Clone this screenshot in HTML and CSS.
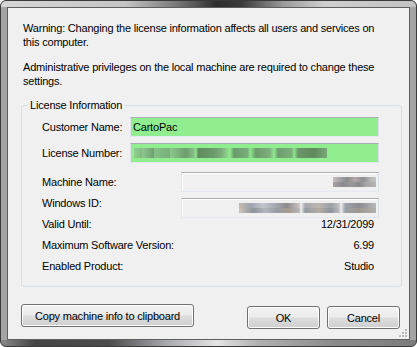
FILE: index.html
```html
<!DOCTYPE html>
<html lang="en">
<head>
    <meta charset="UTF-8">
    <title>License Information</title>
    <link rel="stylesheet" href="styles.css">
</head>
<body>

<div class="window">
    <div class="client">
        <p class="warning">Warning: Changing the license information affects all users and services on this computer.</p>
        <p class="warning second">Administrative privileges on the local machine are required to change these settings.</p>

        <div class="group">
            <span class="legend">License Information</span>

            <div class="row">
                <label class="label-short">Customer Name:</label>
                <div class="field edit">CartoPac</div>
            </div>
            <div class="row gap-small">
                <label class="label-short">License Number:</label>
                <div class="field edit"><span class="mosaic license"></span></div>
            </div>

            <div class="row gap-large">
                <label class="label-long">Machine Name:</label>
                <div class="field readonly"><span class="mosaic machine"></span></div>
            </div>
            <div class="row gap-small top">
                <label class="label-long">Windows ID:</label>
                <div class="field readonly"><span class="mosaic winid"></span></div>
            </div>

            <div class="info first">
                <span>Valid Until:</span>
                <span class="value">12/31/2099</span>
            </div>
            <div class="info">
                <span>Maximum Software Version:</span>
                <span class="value">6.99</span>
            </div>
            <div class="info">
                <span>Enabled Product:</span>
                <span class="value">Studio</span>
            </div>
        </div>

        <div class="buttons">
            <button class="btn copy">Copy machine info to clipboard</button>
            <div class="dialog-buttons">
                <button class="btn">OK</button>
                <button class="btn">Cancel</button>
            </div>
        </div>

        <svg class="grip" width="10" height="10" viewBox="0 0 10 10">
            <rect x="7" y="1" width="2" height="2" fill="#b8b8b8"/>
            <rect x="4" y="4" width="2" height="2" fill="#b8b8b8"/>
            <rect x="7" y="4" width="2" height="2" fill="#b8b8b8"/>
            <rect x="1" y="7" width="2" height="2" fill="#b8b8b8"/>
            <rect x="4" y="7" width="2" height="2" fill="#b8b8b8"/>
            <rect x="7" y="7" width="2" height="2" fill="#b8b8b8"/>
        </svg>
    </div>
</div>

</body>
</html>
```

FILE: styles.css
```css
body { margin: 0; font-family: "Liberation Sans", Arial, sans-serif; font-size: 11px; letter-spacing: -0.2px; color: #000; }

.window {
    width: 417px;
    height: 347px;
    box-sizing: border-box;
    border: 1px solid #3a3a3a;
    border-radius: 6px;
    padding: 6px;
    background:
        linear-gradient(90deg, #d6d6d6 0%, #c4c4c4 30%, #7a7a7a 42%, #2e2e2e 52%, #3a3a3a 58%, #9a9a9a 68%, #cfcfcf 78%, #c2c2c2 100%) top / 100% 6px no-repeat,
        linear-gradient(90deg, #8a8a8a 0%, #454545 8%, #4c4c4c 26%, #a8a8b0 40%, #e4e4e4 52%, #b0b0b0 62%, #8c8c8c 80%, #7c7c7c 100%) bottom / 100% 6px no-repeat,
        #a4a4a4;
}

.client {
    position: relative;
    height: 100%;
    box-sizing: border-box;
    border: 1px solid #5e5e5e;
    background-color: #f0f0f0;
    padding-top: 13px;
}

.warning { margin: 0 0 0 15px; line-height: 14px; width: 370px; }
.warning.second { margin-top: 11px; }

.group {
    position: relative;
    width: 381px;
    box-sizing: border-box;
    margin: 17px 0 0 13px;
    padding: 11px 22px 9px 20px;
    border: 1px solid #d5dfe5;
    border-radius: 3px;
}
.legend {
    position: absolute;
    top: -8px;
    left: 6px;
    padding: 0 2px;
    line-height: 14px;
    background-color: #f0f0f0;
}

.row { display: flex; align-items: center; height: 20px; }
.row.gap-small { margin-top: 6px; }
.row.gap-large { margin-top: 9px; }
.row.top { align-items: flex-start; }
.row.top label { margin-top: -2px; }
.row label { line-height: 14px; }

.label-short { width: 88px; flex-shrink: 0; }
.label-long { width: 139px; flex-shrink: 0; }

.field {
    flex: 1;
    height: 20px;
    box-sizing: border-box;
    border: 1px solid;
    border-color: #abadb3 #dbdfe6 #e3e9ef #e2e3ea;
    display: flex;
    align-items: center;
    padding: 0 2px;
    line-height: 14px;
}
.edit { background-color: #90ee90; }
.readonly { background-color: #f0f0f0; justify-content: flex-end; box-shadow: inset 1px 1px 0 #fff; }

.mosaic { display: block; height: 10px; }
.license {
    width: 193px;
    margin-left: 1px;
    background:
        linear-gradient(90deg, #8fd08f 0, #7fba7f 8px, #90c890 8px, #6f9f6f 20px, #86c086 20px, #7aae7a 36px, #8cc88c 36px, #6e9c6e 52px, #86be86 60px, #90e890 62px,
            #5f8a5f 64px, #6c9a6c 80px, #7fae7f 88px, #90e890 96px, #6a9a6a 100px, #7cae7c 114px, #90e890 116px,
            #6a9a6a 122px, #80b080 136px, #90e890 140px, #6e9c6e 144px, #7cb07c 158px, #90e890 160px, #6a966a 164px, #5f8a5f 180px, #78a878 193px);
}
.machine {
    width: 43px;
    background:
        linear-gradient(90deg, #c8bcbc 0, #a0a0a8 8px, #8a8a8a 14px, #b0a8a8 22px, #8c8c90 30px, #b8b8b8 38px, #c4c4c4 43px) top / 100% 50% no-repeat,
        linear-gradient(90deg, #a8a0a0 0, #8a8a8e 10px, #989898 18px, #8a8a8a 26px, #a8a8a8 34px, #b4b4b4 43px) bottom / 100% 50% no-repeat;
}
.winid {
    width: 137px;
    background:
        linear-gradient(90deg, #c8b8a8 0, #9ca4b0 12px, #c4c4cc 24px, #a4a8b0 36px, #8c8c8c 48px, #c8c0c0 60px, #f0f0f0 62px, #a8a8b0 66px, #bcb4b0 80px, #9aa0a8 92px, #c0c0c0 100px, #f0f0f0 102px, #a0a4ac 106px, #8c8c90 120px, #b8b8b8 137px) top / 100% 50% no-repeat,
        linear-gradient(90deg, #d0c4b8 0, #8c949c 14px, #b4b4bc 26px, #989ca4 38px, #a89c90 50px, #b4b4b8 60px, #f0f0f0 62px, #949ca4 66px, #b4aca4 80px, #8c949c 92px, #bcbcbc 100px, #f0f0f0 102px, #9ca0a8 106px, #a09890 120px, #b0b0b0 137px) bottom / 100% 50% no-repeat;
}

.info { display: flex; justify-content: space-between; line-height: 21px; padding-right: 5px; }
.info.first { margin-top: -4px; }

.buttons { display: flex; justify-content: space-between; align-items: flex-start; margin: 17px 9px 0 13px; }
.dialog-buttons { display: flex; gap: 7px; margin-top: 2px; }

.btn {
    font-family: "Liberation Sans", Arial, sans-serif;
    font-size: 11px;
    letter-spacing: -0.2px;
    color: #000;
    height: 23px;
    width: 73px;
    padding: 0;
    border: 1px solid #707070;
    border-radius: 3px;
    background: linear-gradient(#f2f2f2 0%, #ebebeb 48%, #dddddd 52%, #cfcfcf 100%);
    box-shadow: inset 0 0 0 1px #fcfcfc;
}
.btn.copy { width: 173px; }

.grip { position: absolute; right: 1px; bottom: 1px; }
```
